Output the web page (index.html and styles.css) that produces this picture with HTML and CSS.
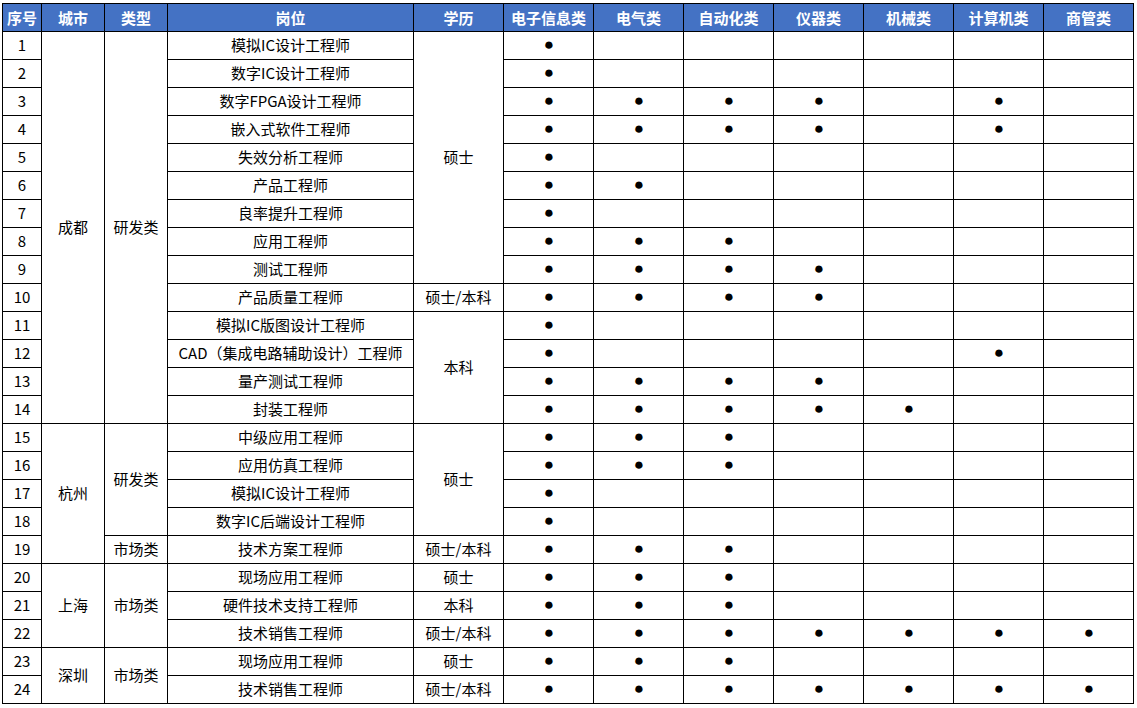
FILE: index.html
```html
<!DOCTYPE html>
<html lang="zh-CN">
<head>
<meta charset="utf-8">
<title>岗位需求表</title>
<link rel="stylesheet" href="styles.css">
</head>
<body>
<table class="grid">
<colgroup>
<col class="c-no"><col class="c-city"><col class="c-type"><col class="c-post"><col class="c-edu">
<col class="c-m"><col class="c-m"><col class="c-m"><col class="c-m"><col class="c-m"><col class="c-m"><col class="c-m">
</colgroup>
<thead>
<tr><th>序号</th><th>城市</th><th>类型</th><th>岗位</th><th>学历</th><th>电子信息类</th><th>电气类</th><th>自动化类</th><th>仪器类</th><th>机械类</th><th>计算机类</th><th>商管类</th></tr>
</thead>
<tbody>
<tr><td>1</td><td rowspan="14">成都</td><td rowspan="14">研发类</td><td>模拟IC设计工程师</td><td rowspan="9">硕士</td><td class="d">●</td><td></td><td></td><td></td><td></td><td></td><td></td></tr>
<tr><td>2</td><td>数字IC设计工程师</td><td class="d">●</td><td></td><td></td><td></td><td></td><td></td><td></td></tr>
<tr><td>3</td><td>数字FPGA设计工程师</td><td class="d">●</td><td class="d">●</td><td class="d">●</td><td class="d">●</td><td></td><td class="d">●</td><td></td></tr>
<tr><td>4</td><td>嵌入式软件工程师</td><td class="d">●</td><td class="d">●</td><td class="d">●</td><td class="d">●</td><td></td><td class="d">●</td><td></td></tr>
<tr><td>5</td><td>失效分析工程师</td><td class="d">●</td><td></td><td></td><td></td><td></td><td></td><td></td></tr>
<tr><td>6</td><td>产品工程师</td><td class="d">●</td><td class="d">●</td><td></td><td></td><td></td><td></td><td></td></tr>
<tr><td>7</td><td>良率提升工程师</td><td class="d">●</td><td></td><td></td><td></td><td></td><td></td><td></td></tr>
<tr><td>8</td><td>应用工程师</td><td class="d">●</td><td class="d">●</td><td class="d">●</td><td></td><td></td><td></td><td></td></tr>
<tr><td>9</td><td>测试工程师</td><td class="d">●</td><td class="d">●</td><td class="d">●</td><td class="d">●</td><td></td><td></td><td></td></tr>
<tr><td>10</td><td>产品质量工程师</td><td>硕士/本科</td><td class="d">●</td><td class="d">●</td><td class="d">●</td><td class="d">●</td><td></td><td></td><td></td></tr>
<tr><td>11</td><td>模拟IC版图设计工程师</td><td rowspan="4">本科</td><td class="d">●</td><td></td><td></td><td></td><td></td><td></td><td></td></tr>
<tr><td>12</td><td>CAD（集成电路辅助设计）工程师</td><td class="d">●</td><td></td><td></td><td></td><td></td><td class="d">●</td><td></td></tr>
<tr><td>13</td><td>量产测试工程师</td><td class="d">●</td><td class="d">●</td><td class="d">●</td><td class="d">●</td><td></td><td></td><td></td></tr>
<tr><td>14</td><td>封装工程师</td><td class="d">●</td><td class="d">●</td><td class="d">●</td><td class="d">●</td><td class="d">●</td><td></td><td></td></tr>
<tr><td>15</td><td rowspan="5">杭州</td><td rowspan="4">研发类</td><td>中级应用工程师</td><td rowspan="4">硕士</td><td class="d">●</td><td class="d">●</td><td class="d">●</td><td></td><td></td><td></td><td></td></tr>
<tr><td>16</td><td>应用仿真工程师</td><td class="d">●</td><td class="d">●</td><td class="d">●</td><td></td><td></td><td></td><td></td></tr>
<tr><td>17</td><td>模拟IC设计工程师</td><td class="d">●</td><td></td><td></td><td></td><td></td><td></td><td></td></tr>
<tr><td>18</td><td>数字IC后端设计工程师</td><td class="d">●</td><td></td><td></td><td></td><td></td><td></td><td></td></tr>
<tr><td>19</td><td>市场类</td><td>技术方案工程师</td><td>硕士/本科</td><td class="d">●</td><td class="d">●</td><td class="d">●</td><td></td><td></td><td></td><td></td></tr>
<tr><td>20</td><td rowspan="3">上海</td><td rowspan="3">市场类</td><td>现场应用工程师</td><td>硕士</td><td class="d">●</td><td class="d">●</td><td class="d">●</td><td></td><td></td><td></td><td></td></tr>
<tr><td>21</td><td>硬件技术支持工程师</td><td>本科</td><td class="d">●</td><td class="d">●</td><td class="d">●</td><td></td><td></td><td></td><td></td></tr>
<tr><td>22</td><td>技术销售工程师</td><td>硕士/本科</td><td class="d">●</td><td class="d">●</td><td class="d">●</td><td class="d">●</td><td class="d">●</td><td class="d">●</td><td class="d">●</td></tr>
<tr><td>23</td><td rowspan="2">深圳</td><td rowspan="2">市场类</td><td>现场应用工程师</td><td>硕士</td><td class="d">●</td><td class="d">●</td><td class="d">●</td><td></td><td></td><td></td><td></td></tr>
<tr><td>24</td><td>技术销售工程师</td><td>硕士/本科</td><td class="d">●</td><td class="d">●</td><td class="d">●</td><td class="d">●</td><td class="d">●</td><td class="d">●</td><td class="d">●</td></tr>
</tbody>
</table>
</body>
</html>
```
FILE: styles.css
```css
html, body {
  margin: 0;
  padding: 0;
  background: #ffffff;
}
body {
  padding: 3px 0 0 2px;
  font-family: "Noto Sans CJK SC", "Noto Sans", sans-serif;
  font-size: 15px;
  color: #000000;
}
.grid {
  border-collapse: collapse;
  table-layout: fixed;
  width: 1132px;
}
.c-no { width: 39px; }
.c-city { width: 63px; }
.c-type { width: 63px; }
.c-post { width: 246px; }
.c-edu { width: 90px; }
.c-m { width: 90px; }
.grid th, .grid td {
  border: 1px solid #000000;
  padding: 0;
  text-align: center;
  vertical-align: middle;
  white-space: nowrap;
  overflow: hidden;
  line-height: 20px;
}
.grid th {
  height: 27px;
  background: #4472c4;
  color: #ffffff;
  font-weight: bold;
  font-size: 15px;
}
.grid td {
  height: 26px;
  padding-bottom: 1px;
}
.grid td.d {
  font-family: "Liberation Sans", sans-serif;
  font-size: 17px;
  padding-left: 1px;
}
```
